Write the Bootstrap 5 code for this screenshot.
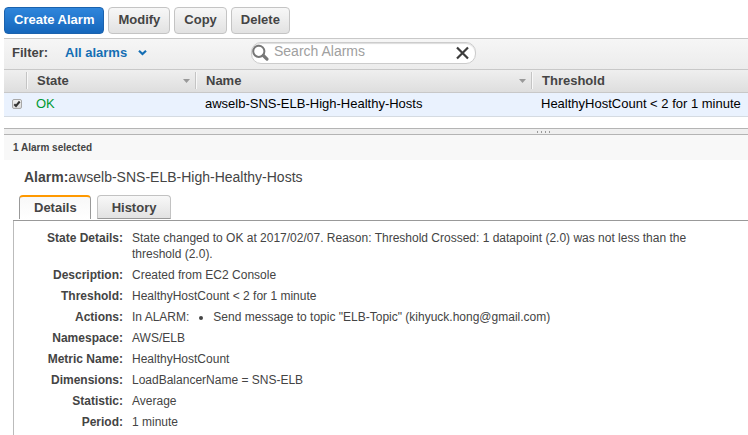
<!DOCTYPE html>
<html lang="en">
<head>
<meta charset="utf-8">
<meta name="viewport" content="width=device-width, initial-scale=1">
<title>Alarms</title>
<link href="https://cdn.jsdelivr.net/npm/bootstrap@5.3.0/dist/css/bootstrap.min.css" rel="stylesheet">
<style>
body { font-family: "Liberation Sans", Arial, sans-serif; font-size: 13px; line-height: 16px; color: #444; background: #fff; }
.tool-row { padding: 7px 0 4px; }
.btn-tool { --bs-btn-font-size: 13px; --bs-btn-font-weight: 700; --bs-btn-line-height: 16px; --bs-btn-border-radius: 4px; --bs-btn-color: #444; --bs-btn-border-color: #c4c4c4; padding: 4px 9px 5px; background-image: linear-gradient(#f7f7f7, #e2e2e2); }
.btn-main { --bs-btn-color: #fff; --bs-btn-hover-color: #fff; --bs-btn-border-color: #1b62ad; background-image: linear-gradient(#2f86dc, #1566bb); }
.filter-bar { height: 32px; padding-bottom: 2px; border-top: 1px solid #c8c8c8; border-bottom: 1px solid #c8c8c8; background: linear-gradient(#f6f6f6, #ececec); }
.filter-name { width: 53px; }
.filter-pick { width: 186px; }
.filter-pick .btn { --bs-btn-font-size: 13px; --bs-btn-font-weight: 700; --bs-btn-line-height: 16px; --bs-btn-color: #146eb4; }
.search-box { width: 225px; height: 22px; border: 1px solid #ccc; border-radius: 10px; background: #fff; box-shadow: inset 0 1px 1px #ddd; }
.search-box input { font-size: 14px; line-height: 16px; color: #444; outline: 0; min-width: 0; height: 20px; padding: 0 0 4px; }
.search-box input::placeholder { color: #a0a0a0; opacity: 1; }
.alarm-table { table-layout: fixed; border-collapse: separate; border-spacing: 0; line-height: 16px; }
.alarm-table th { height: 23px; padding: 0 0 1px; background: linear-gradient(#efefef, #dedede); border-bottom: 1px solid #c8c8c8; color: #444; vertical-align: middle; }
.alarm-table .head-cell { height: 17px; padding: 0 5px 0 10px; border-left: 1px solid #c4c4c4; box-shadow: inset 1px 0 #f8f8f8; }
.alarm-table td { height: 24px; padding: 0 0 2px 10px; background: #eaf2fe; border-bottom: 1px solid #d5dbe2; color: #000; vertical-align: middle; white-space: nowrap; }
.alarm-table .pick-cell { padding: 0 0 2px 8px; }
.alarm-table .ok-state { color: #093; }
.col-pick { width: 22px; } .col-state { width: 169px; } .col-name { width: 336px; }
.row-check { appearance: none; width: 10px; height: 10px; border: 1px solid #a8a8a8; border-radius: 2px; background: linear-gradient(#f0f0f0, #dcdcdc); }
.row-check:checked { background: url("data:image/svg+xml,%3Csvg xmlns='http://www.w3.org/2000/svg' viewBox='0 0 8 8'%3E%3Cpath d='M1.3 4.3 3 6 6.7 1.5' fill='none' stroke='%23333' stroke-width='2'/%3E%3C/svg%3E") center / 8px no-repeat, linear-gradient(#f0f0f0, #dcdcdc); }
.split-bar { height: 7px; margin-top: 11px; background: #efefef; border-top: 1px solid #b4b4b4; border-bottom: 1px solid #b4b4b4; padding-left: 532px; }
.split-bar svg { display: block; }
.count-bar { height: 25px; font-size: 10px; background: #f8f8f8; padding-left: 9px; }
.alarm-title { font-size: 14px; line-height: 18px; font-weight: 400; padding: 8px 0 0 20px; color: #444; }
.tab-wrap { margin-left: 9px; }
.detail-tabs { padding: 9px 0 1px 6px; gap: 6px; --bs-nav-tabs-border-width: 0; border-bottom: 1px solid #999; }
.detail-tabs .nav-link { height: 24px; padding: 3px 14px 2px; margin: 0; font-weight: 700; color: #444; border: 1px solid #c2c2c2; border-bottom-color: #999; border-radius: 4px 4px 0 0; background: linear-gradient(#f8f8f8, #e2e2e2); }
.detail-tabs .nav-link.active { color: #444; padding: 2px 13px 2px 14px; border-color: #999; border-top: 2px solid #f90; border-bottom: 0; background: linear-gradient(#f8f8f8, #fff); }
.detail-pane { border-left: 1px solid #bbb; padding: 9px 12px 5px 0; font-size: 12px; }
.fact-list { display: grid; grid-template-columns: 109px 1fr; column-gap: 9px; row-gap: 5px; color: #444; }
.fact-list dt { text-align: right; white-space: nowrap; }
.action-list { padding-left: 24px; }
</style>
</head>
<body>
<main class="ps-1">
  <div class="tool-row d-flex gap-1">
    <button type="button" class="btn btn-tool btn-main">Create Alarm</button>
    <button type="button" class="btn btn-tool">Modify</button>
    <button type="button" class="btn btn-tool">Copy</button>
    <button type="button" class="btn btn-tool">Delete</button>
  </div>
  <div class="filter-bar d-flex align-items-center ps-2">
    <span class="filter-name fw-bold">Filter:</span>
    <div class="filter-pick">
      <button type="button" class="btn p-0 border-0 d-flex align-items-center">All alarms
        <svg class="ms-2" width="14" height="8" viewBox="0 0 14 8" aria-hidden="true"><path d="M4 1.800 7.500 5 11 1.800" fill="none" stroke="#146eb4" stroke-width="2.200"/></svg>
      </button>
    </div>
    <div class="search-box d-flex align-items-center">
      <svg class="flex-shrink-0" width="18" height="18" viewBox="0 0 18 18" aria-hidden="true"><circle cx="6.800" cy="7.300" r="5.600" fill="none" stroke="#777" stroke-width="2"/><path d="m11.300 11.500 3.700 3.600" stroke="#777" stroke-width="3.200" stroke-linecap="round"/></svg>
      <input class="flex-grow-1 border-0 bg-transparent ms-1" type="text" placeholder="Search Alarms" aria-label="Search Alarms">
      <button type="button" class="btn p-0 border-0 d-flex me-1" aria-label="Clear search"><svg width="16" height="16" viewBox="0 0 16 16"><path d="m2 2.500 11 11M13 2.500l-11 11" stroke="#3c3c3c" stroke-width="2.200"/></svg></button>
    </div>
  </div>
  <table class="alarm-table w-100">
    <colgroup><col class="col-pick"><col class="col-state"><col class="col-name"><col></colgroup>
    <thead><tr>
      <th></th>
      <th scope="col"><div class="head-cell d-flex align-items-center justify-content-between">State <svg width="7" height="4" aria-hidden="true"><path d="M0 0h7L3.500 4z" fill="#999"/></svg></div></th>
      <th scope="col"><div class="head-cell d-flex align-items-center justify-content-between">Name <svg width="7" height="4" aria-hidden="true"><path d="M0 0h7L3.500 4z" fill="#999"/></svg></div></th>
      <th scope="col"><div class="head-cell d-flex align-items-center">Threshold</div></th>
    </tr></thead>
    <tbody><tr>
      <td class="pick-cell"><input class="row-check d-block" type="checkbox" checked aria-label="Select awselb-SNS-ELB-High-Healthy-Hosts"></td>
      <td class="ok-state">OK</td>
      <td>awselb-SNS-ELB-High-Healthy-Hosts</td>
      <td>HealthyHostCount &lt; 2 for 1 minute</td>
    </tr></tbody>
  </table>
  <div class="split-bar"><svg width="17" height="5" aria-hidden="true"><path d="M1 2h1v2H1zM5 2h1v2H5zM9 2h1v2H9zM13 2h1v2h-1z" fill="#999"/></svg></div>
  <div class="count-bar d-flex align-items-center fw-bold">1 Alarm selected</div>
  <h1 class="alarm-title m-0"><b>Alarm:</b>awselb-SNS-ELB-High-Healthy-Hosts</h1>
  <div class="tab-wrap">
    <ul class="nav nav-tabs detail-tabs" role="tablist">
      <li class="nav-item" role="presentation"><button type="button" class="nav-link active" role="tab" aria-selected="true" data-bs-toggle="tab" data-bs-target="#details">Details</button></li>
      <li class="nav-item" role="presentation"><button type="button" class="nav-link" role="tab" aria-selected="false" data-bs-toggle="tab" data-bs-target="#history">History</button></li>
    </ul>
    <div class="tab-content detail-pane">
      <div class="tab-pane active" id="details" role="tabpanel">
        <dl class="fact-list m-0">
          <dt>State Details:</dt><dd class="m-0">State changed to OK at 2017/02/07. Reason: Threshold Crossed: 1 datapoint (2.0) was not less than the threshold (2.0).</dd>
          <dt>Description:</dt><dd class="m-0">Created from EC2 Console</dd>
          <dt>Threshold:</dt><dd class="m-0">HealthyHostCount &lt; 2 for 1 minute</dd>
          <dt>Actions:</dt><dd class="m-0 d-flex">In ALARM: <ul class="action-list m-0"><li>Send message to topic "ELB-Topic" (kihyuck.hong@gmail.com)</li></ul></dd>
          <dt>Namespace:</dt><dd class="m-0">AWS/ELB</dd>
          <dt>Metric Name:</dt><dd class="m-0">HealthyHostCount</dd>
          <dt>Dimensions:</dt><dd class="m-0">LoadBalancerName = SNS-ELB</dd>
          <dt>Statistic:</dt><dd class="m-0">Average</dd>
          <dt>Period:</dt><dd class="m-0">1 minute</dd>
        </dl>
      </div>
      <div class="tab-pane" id="history" role="tabpanel"></div>
    </div>
  </div>
</main>
<script src="https://cdn.jsdelivr.net/npm/bootstrap@5.3.0/dist/js/bootstrap.bundle.min.js"></script>
</body>
</html>
